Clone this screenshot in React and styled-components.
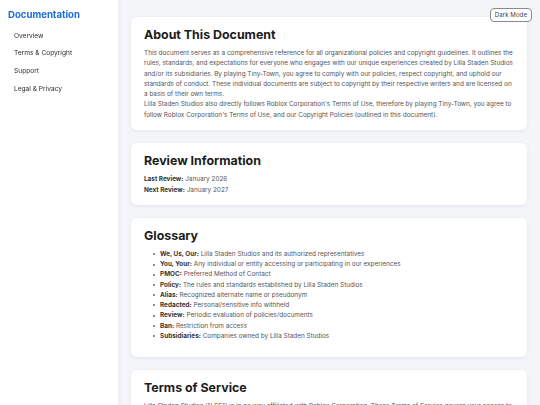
import React from 'react'
import styled, { createGlobalStyle } from 'styled-components'

const GlobalStyle = createGlobalStyle`
  * { box-sizing: border-box; }
  body {
    margin: 0;
    font-family: Inter, "Noto Sans", "Liberation Sans", sans-serif;
    background: #f4f5f9;
    color: #1f1f1f;
  }
`

const Layout = styled.div`
  display: flex;
  min-height: 100vh;
`

const Sidebar = styled.nav`
  position: fixed;
  top: 0;
  left: 0;
  bottom: 0;
  width: 118px;
  background: #ffffff;
  box-shadow: 1px 0 4px rgba(0, 0, 0, 0.06);
  padding: 8.5px 8px;
`

const Brand = styled.div`
  font-size: 9.6px;
  font-weight: 700;
  color: #1a6fe0;
  line-height: 12px;
  margin-bottom: 11px;
`

const NavList = styled.ul`
  list-style: none;
  margin: 0;
  padding: 0 0 0 6px;
  display: flex;
  flex-direction: column;
  gap: 8.2px;
`

const NavItem = styled.li`
  font-size: 6.6px;
  line-height: 9.5px;
  color: #2b2b2b;
`

const Main = styled.main`
  margin-left: 118px;
  flex: 1;
  padding: 17px 13px;
  display: flex;
  flex-direction: column;
  gap: 13px;
`

const ThemeToggle = styled.button`
  position: fixed;
  top: 8px;
  right: 8px;
  font-family: inherit;
  font-size: 6.2px;
  color: #444;
  background: #ffffff;
  border: 1px solid #8a8a8a;
  border-radius: 4px;
  padding: 2px 4px;
  line-height: 8px;
`

const Card = styled.section`
  background: #ffffff;
  border-radius: 6px;
  box-shadow: 0 1px 4px rgba(0, 0, 0, 0.07);
  padding: 10px 13px 10px;
`

const Heading = styled.h2`
  margin: 0 0 5px;
  font-size: 12.4px;
  line-height: 16px;
  font-weight: 700;
  color: #1c1c1c;
`

const Body = styled.p`
  margin: 0;
  font-size: 6.4px;
  line-height: 10.3px;
  color: #555;
`

const Meta = styled.div`
  font-size: 6.4px;
  line-height: 10.5px;
  color: #555;
  b { color: #333; font-weight: 700; }
`

const Terms = styled.ul`
  margin: 0 0 6px;
  padding: 0 0 0 9px;
  list-style: none;
`

const Term = styled.li`
  position: relative;
  font-size: 6.4px;
  line-height: 10.2px;
  color: #555;
  padding-left: 7px;
  &::before {
    content: '';
    position: absolute;
    left: 0;
    top: 4.3px;
    width: 2px;
    height: 2px;
    border-radius: 50%;
    background: #666;
  }
  b { color: #333; font-weight: 700; }
`

const nav = ['Overview', 'Terms & Copyright', 'Support', 'Legal & Privacy']

const glossary = [
  ['We, Us, Our:', 'Lilla Staden Studios and its authorized representatives'],
  ['You, Your:', 'Any individual or entity accessing or participating in our experiences'],
  ['PMOC:', 'Preferred Method of Contact'],
  ['Policy:', 'The rules and standards established by Lilla Staden Studios'],
  ['Alias:', 'Recognized alternate name or pseudonym'],
  ['Redacted:', 'Personal/sensitive info withheld'],
  ['Review:', 'Periodic evaluation of policies/documents'],
  ['Ban:', 'Restriction from access'],
  ['Subsidiaries:', 'Companies owned by Lilla Staden Studios'],
]

export default function App() {
  return (
    <Layout>
      <GlobalStyle />
      <Sidebar>
        <Brand>Documentation</Brand>
        <NavList>
          {nav.map((item) => (
            <NavItem key={item}>{item}</NavItem>
          ))}
        </NavList>
      </Sidebar>
      <ThemeToggle>Dark Mode</ThemeToggle>
      <Main>
        <Card>
          <Heading>About This Document</Heading>
          <Body>
            This document serves as a comprehensive reference for all organizational policies and
            copyright guidelines. It outlines the rules, standards, and expectations for everyone who
            engages with our unique experiences created by Lilla Staden Studios and/or its
            subsidiaries. By playing Tiny-Town, you agree to comply with our policies, respect
            copyright, and uphold our standards of conduct. These individual documents are subject to
            copyright by their respective writers and are licensed on a basis of their own terms.
            <br />
            Lilla Staden Studios also directly follows Roblox Corporation's Terms of Use, therefore by
            playing Tiny-Town, you agree to follow Roblox Corporation's Terms of Use, and our Copyright
            Policies (outlined in this document).
          </Body>
        </Card>
        <Card>
          <Heading>Review Information</Heading>
          <Meta>
            <b>Last Review:</b> January 2026
          </Meta>
          <Meta>
            <b>Next Review:</b> January 2027
          </Meta>
        </Card>
        <Card>
          <Heading>Glossary</Heading>
          <Terms>
            {glossary.map(([term, def]) => (
              <Term key={term}>
                <b>{term}</b> {def}
              </Term>
            ))}
          </Terms>
        </Card>
        <Card>
          <Heading>Terms of Service</Heading>
          <Body>
            Lilla Staden Studios ("LSS") is in no way affiliated with Roblox Corporation. These Terms
            of Service govern your access to and use of Tiny-Town and all related experiences.
          </Body>
        </Card>
      </Main>
    </Layout>
  )
}
